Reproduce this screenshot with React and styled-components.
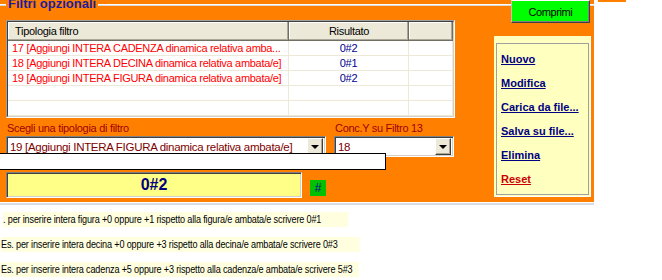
import React from "react";
import styled, { createGlobalStyle } from "styled-components";

const GlobalStyle = createGlobalStyle`
  html, body {
    margin: 0;
    padding: 0;
    background: #fff;
  }
  body {
    width: 662px;
    height: 280px;
    overflow: hidden;
    font-family: "Liberation Sans", Arial, sans-serif;
    font-size: 11px;
    letter-spacing: -0.3px;
  }
`;

const rows = [
  { text: "17 [Aggiungi INTERA CADENZA dinamica relativa amba...", result: "0#2" },
  { text: "18 [Aggiungi INTERA DECINA dinamica relativa ambata/e]", result: "0#1" },
  { text: "19 [Aggiungi INTERA FIGURA dinamica relativa ambata/e]", result: "0#2" },
  { text: "", result: "" },
  { text: "", result: "" },
];

const links = [
  { label: "Nuovo" },
  { label: "Modifica" },
  { label: "Carica da file..." },
  { label: "Salva su file..." },
  { label: "Elimina" },
  { label: "Reset", danger: true },
];

const notes = [
  { text: ". per inserire intera figura +0 oppure +1 rispetto alla figura/e ambata/e scrivere 0#1", top: 7, shift: 0, tail: 34 },
  { text: "Es. per inserire intera decina +0 oppure +3 rispetto alla decina/e ambata/e scrivere 0#3", top: 10, shift: -2, tail: 28 },
  { text: "Es. per inserire intera cadenza +5 oppure +3 rispetto alla cadenza/e ambata/e scrivere 5#3", top: 10, shift: -2, tail: 8 },
];

const App = () => {
  return (
    <Page>
      <GlobalStyle />
      <TopRow>
        <OrangePanel>
          <Legend>
            <LegendLine $w="6px" />
            <LegendText>Filtri opzionali</LegendText>
            <LegendLine />
          </Legend>

          <LeftColumn>
            <Table>
              <TableInner>
                <HeaderRow>
                  <HeaderCell>Tipologia filtro</HeaderCell>
                  <HeaderCell $center>Risultato</HeaderCell>
                  <HeaderCell />
                </HeaderRow>
                {rows.map((r, i) => (
                  <Row key={i}>
                    <Cell>{r.text}</Cell>
                    <ResultCell>{r.result}</ResultCell>
                    <Cell />
                  </Row>
                ))}
              </TableInner>
            </Table>

            <FieldsGrid>
              <FieldLabel>Scegli una tipologia di filtro</FieldLabel>
              <FieldLabel>Conc.Y su Filtro 13</FieldLabel>
              <Combo>
                <ComboText>19 [Aggiungi INTERA FIGURA dinamica relativa ambata/e]</ComboText>
                <DropButton>
                  <Arrow />
                </DropButton>
              </Combo>
              <Combo>
                <ComboText>18</ComboText>
                <DropButton>
                  <Arrow />
                </DropButton>
              </Combo>
            </FieldsGrid>

            <ResultRow>
              <ResultField>0#2</ResultField>
              <HashBox>#</HashBox>
            </ResultRow>
          </LeftColumn>

          <RightColumn>
            <CompressButton>Comprimi</CompressButton>
            <ActionPanel>
              <ActionList>
                {links.map((l) => (
                  <ActionItem key={l.label}>
                    <ActionLink $danger={l.danger}>{l.label}</ActionLink>
                  </ActionItem>
                ))}
              </ActionList>
            </ActionPanel>
          </RightColumn>

          <InputBand />
        </OrangePanel>
        <Sliver />
      </TopRow>

      <Divider />

      <Notes>
        {notes.map((n, i) => (
          <NoteClip key={i} $top={n.top}>
            <NoteText $shift={n.shift} $tail={n.tail}>
              {n.text}
            </NoteText>
          </NoteClip>
        ))}
      </Notes>
    </Page>
  );
};

const Page = styled.div`
  width: 662px;
  height: 280px;
  display: flex;
  flex-direction: column;
  background: #fff;
`;

const TopRow = styled.div`
  display: flex;
  align-items: flex-start;
`;

const OrangePanel = styled.div`
  position: relative;
  width: 594px;
  height: 202px;
  background: #ff8000;
  display: grid;
  grid-template-columns: 6px 449px 39px 97px 3px;
  grid-template-rows: 20px 1fr;
`;

const Sliver = styled.div`
  margin-left: 4px;
  width: 28px;
  height: 2px;
  background: #ff8000;
`;

const Legend = styled.div`
  grid-column: 1 / -1;
  grid-row: 1;
  display: flex;
  align-items: flex-start;
`;

const LegendLine = styled.div`
  flex: ${(p) => (p.$w ? `0 0 ${p.$w}` : "1")};
  margin-top: 4px;
  height: 1px;
  border-top: 1px solid #fff;
  background: #d8d8d8;
`;

const LegendText = styled.div`
  margin: -3px 2px 0;
  font-weight: bold;
  font-size: 13px;
  line-height: 13px;
  letter-spacing: 0;
  color: #1c1c9c;
  white-space: nowrap;
`;

const LeftColumn = styled.div`
  grid-column: 2;
  grid-row: 2;
  display: flex;
  flex-direction: column;
`;

const Table = styled.div`
  width: 449px;
  height: 98px;
  box-sizing: border-box;
  border: 1px solid;
  border-color: #a0a0a0 #fff #fff #a0a0a0;
  background: #fff;
`;

const TableInner = styled.div`
  height: 100%;
  box-sizing: border-box;
  border: 1px solid;
  border-color: #404040 #d4d0c8 #d4d0c8 #404040;
  overflow: hidden;
`;

const HeaderRow = styled.div`
  display: grid;
  grid-template-columns: 281px 120px 1fr;
  height: 19px;
`;

const HeaderCell = styled.div`
  background: #ece9d8;
  box-shadow: inset -1px -1px #716f64, inset -2px -2px #aca899, inset 1px 1px #fff;
  padding-left: ${(p) => (p.$center ? "0" : "7px")};
  text-align: ${(p) => (p.$center ? "center" : "left")};
  line-height: 18px;
  color: #000;
`;

const Row = styled.div`
  display: grid;
  grid-template-columns: 281px 120px 1fr;
  height: 15px;
  box-sizing: border-box;
  border-bottom: 1px solid #ece9d8;
`;

const Cell = styled.div`
  border-right: 1px solid #ece9d8;
  padding-left: 4px;
  line-height: 14px;
  color: #ff0000;
  white-space: nowrap;
  overflow: hidden;
`;

const ResultCell = styled(Cell)`
  padding-left: 0;
  text-align: center;
  color: #000090;
`;

const FieldsGrid = styled.div`
  margin-top: 3px;
  display: grid;
  grid-template-columns: 320px 120px;
  column-gap: 8px;
`;

const FieldLabel = styled.div`
  line-height: 15px;
  padding-left: 1px;
  color: #a00000;
  white-space: nowrap;
`;

const Combo = styled.div`
  height: 21px;
  box-sizing: border-box;
  border: 1px solid;
  border-color: #808080 #fff #fff #808080;
  box-shadow: inset 1px 1px #404040, inset -1px -1px #d4d0c8;
  background: #fff;
  display: flex;
  align-items: center;
  padding: 0 2px 0 3px;
`;

const ComboText = styled.div`
  flex: 1;
  color: #800000;
  font-size: 11.5px;
  white-space: nowrap;
  overflow: hidden;
`;

const DropButton = styled.div`
  width: 16px;
  height: 17px;
  box-sizing: border-box;
  background: #ece9d8;
  border: 1px solid;
  border-color: #fff #404040 #404040 #fff;
  box-shadow: inset -1px -1px #aca899;
  display: flex;
  align-items: center;
  justify-content: center;
`;

const Arrow = styled.div`
  width: 0;
  height: 0;
  border-left: 4px solid transparent;
  border-right: 4px solid transparent;
  border-top: 4px solid #000;
`;

const ResultRow = styled.div`
  margin-top: 15px;
  display: flex;
  align-items: flex-end;
`;

const ResultField = styled.div`
  width: 296px;
  height: 26px;
  box-sizing: border-box;
  border: 1px solid;
  border-color: #808080 #fff #fff #808080;
  box-shadow: inset 1px 1px #404040, inset -1px -1px #d4d0c8;
  background: #ffff88;
  display: flex;
  align-items: center;
  justify-content: center;
  font-weight: bold;
  font-size: 16px;
  letter-spacing: 0;
  color: #000080;
`;

const HashBox = styled.div`
  width: 16px;
  height: 16px;
  margin: 0 0 2px 8px;
  background: #00c000;
  color: #000090;
  font-size: 12px;
  line-height: 16px;
  text-align: center;
`;

const RightColumn = styled.div`
  grid-column: 4;
  grid-row: 1 / 3;
  z-index: 1;
  display: flex;
  flex-direction: column;
  align-items: flex-start;
`;

const CompressButton = styled.div`
  margin-left: 17px;
  width: 79px;
  height: 23px;
  box-sizing: border-box;
  background: #00ff00;
  border: 1px solid;
  border-color: #fff #404040 #404040 #c0c0c0;
  box-shadow: inset -1px -1px #808080;
  display: flex;
  align-items: center;
  justify-content: center;
  color: #000;
  font-size: 11px;
  letter-spacing: -0.4px;
`;

const ActionPanel = styled.div`
  margin-top: 13px;
  width: 97px;
  height: 161px;
  box-sizing: border-box;
  background: #ffffc0;
  padding: 7px 1px 1px 2px;
  border-right: 1px solid #fff;
  border-bottom: 1px solid #fff;
`;

const ActionList = styled.div`
  height: 100%;
  box-sizing: border-box;
  border: 1px solid #a0a0a0;
  padding: 3px 0 0 4px;
  display: flex;
  flex-direction: column;
`;

const ActionItem = styled.div`
  height: 24px;
  display: flex;
  align-items: center;
`;

const ActionLink = styled.span`
  font-weight: bold;
  font-size: 11px;
  letter-spacing: 0;
  color: ${(p) => (p.$danger ? "#cc0000" : "#000080")};
  text-decoration: underline;
  white-space: nowrap;
`;

const InputBand = styled.div`
  position: absolute;
  left: -1px;
  top: 153px;
  width: 387px;
  height: 17px;
  box-sizing: border-box;
  background: #fff;
  border: 1px solid #000;
  z-index: 2;
`;

const Divider = styled.div`
  margin-top: 1px;
  width: 594px;
  height: 2px;
  background: #d6dbe8;
`;

const Notes = styled.div`
  display: flex;
  flex-direction: column;
  align-items: flex-start;
`;

const NoteClip = styled.div`
  margin-top: ${(p) => p.$top}px;
  height: 15px;
  overflow: hidden;
  padding-left: 3px;
`;

const NoteText = styled.div`
  margin-left: ${(p) => p.$shift}px;
  padding-right: ${(p) => p.$tail}px;
  transform: scaleX(0.79);
  transform-origin: left center;
  background: #ffffe0;
  font-size: 11.5px;
  line-height: 15px;
  letter-spacing: -0.2px;
  color: #000;
  white-space: nowrap;
`;

export default App;
